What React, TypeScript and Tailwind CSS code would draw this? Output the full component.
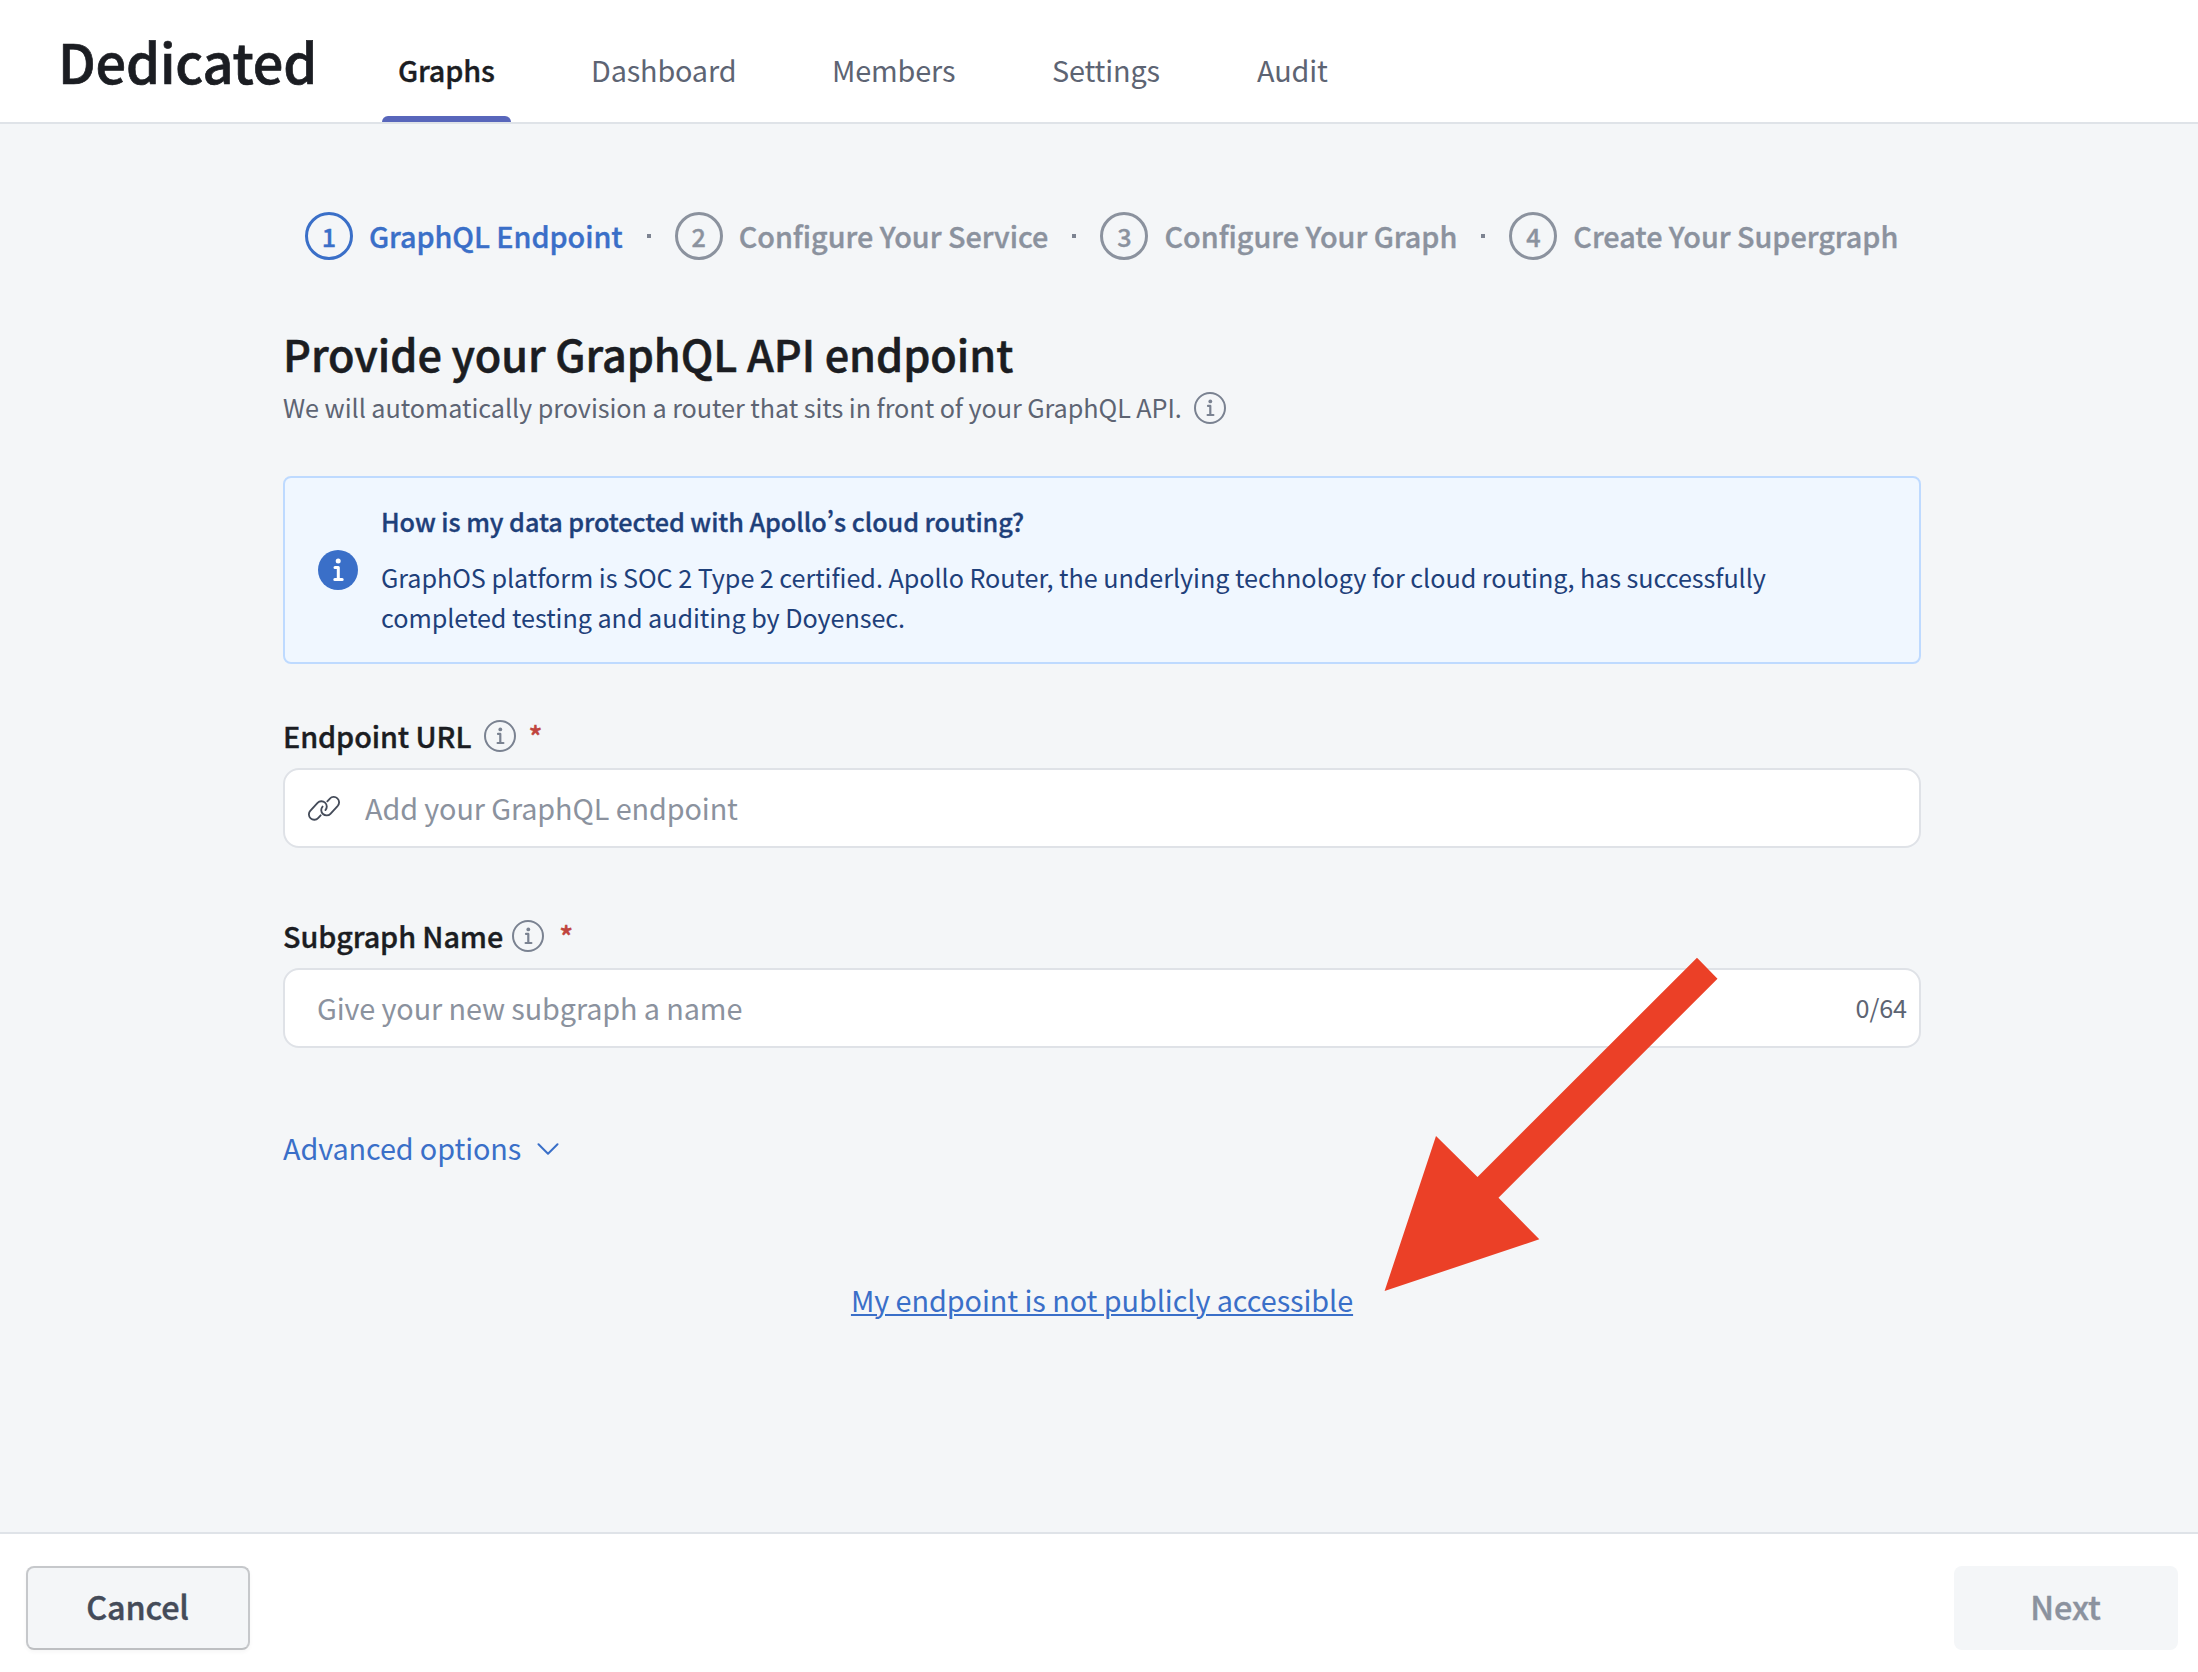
import type { ReactNode } from "react";

const tabs = [
  { label: "Graphs", width: "w-[129px]", active: true },
  { label: "Dashboard", width: "w-[177px]" },
  { label: "Members", width: "w-[156px]" },
  { label: "Settings", width: "w-[141px]" },
  { label: "Audit", width: "w-[104px]" },
];

const steps = [
  "GraphQL Endpoint",
  "Configure Your Service",
  "Configure Your Graph",
  "Create Your Supergraph",
];

function InfoIcon({ className = "" }: { className?: string }) {
  return (
    <svg
      viewBox="0 0 32 32"
      className={"size-8 shrink-0 text-[#7a8291] " + className}
      fill="none"
      stroke="currentColor"
      strokeLinecap="round"
      strokeLinejoin="round"
    >
      <circle cx="16" cy="16" r="15" strokeWidth="2" />
      <circle cx="16.3" cy="9.4" r="1.9" fill="currentColor" stroke="none" />
      <path d="M14 13.9h2.3v9M13.6 23h5.8" strokeWidth="2.2" />
    </svg>
  );
}

function InfoSolidIcon() {
  return (
    <svg viewBox="0 0 40 40" className="size-10 shrink-0" fill="none">
      <circle cx="20" cy="20" r="20" fill="#3a6fc8" />
      <circle cx="20.2" cy="10.9" r="2.5" fill="#fff" />
      <path
        d="M17 17.6h3.3v11.6M16.8 29.4h7.4"
        stroke="#fff"
        strokeWidth="3"
        strokeLinecap="round"
        strokeLinejoin="round"
      />
    </svg>
  );
}

function LinkIcon() {
  return (
    <svg
      viewBox="0 0 96 75"
      className="h-[25px] w-8 shrink-0"
      fill="none"
      stroke="#444b59"
      strokeWidth="5.5"
      strokeLinecap="round"
      strokeLinejoin="round"
    >
      <path d="M38 58 30.3 66.3A16 16 0 0 1 6.7 44.7L28.7 20.7A16 16 0 0 1 52.3 42.3" />
      <path d="M58 16 65.7 7.7A16 16 0 0 1 89.3 29.3L67.3 53.3A16 16 0 0 1 43.7 31.7" />
    </svg>
  );
}

function Label({ text, gap, starGap }: { text: string; gap: string; starGap: string }) {
  return (
    <div className="flex h-10 items-center text-[28.8px] leading-10 font-medium tracking-[-0.09px] text-[#1b1d22] [-webkit-text-stroke:0.013em]">
      <span className="pt-[2px]">{text}</span>
      <InfoIcon className={"mt-[2px] " + gap} />
      <span className={"pt-[2px] text-[#c0443e] " + starGap}>*</span>
    </div>
  );
}

function Field({ children, className }: { children: ReactNode; className: string }) {
  return (
    <div
      className={
        "mt-[13px] flex h-20 items-center rounded-2xl border-2 border-[#dfe2e7] bg-white text-[28.8px] leading-[38px] tracking-[-0.1px] text-[#8b929e] " +
        className
      }
    >
      {children}
    </div>
  );
}

export default function App() {
  return (
    <div className="relative flex h-[1672px] w-[2198px] flex-col overflow-hidden bg-[#f4f6f8] font-['Noto_Sans_CJK_SC',sans-serif]">
      <header className="flex h-[124px] shrink-0 border-b-2 border-[#dfe3e8] bg-white pl-[58px]">
        <h1 className="mt-[30px] h-[61px] w-[260px] text-[54px] leading-[61px] font-medium tracking-[-0.15px] whitespace-nowrap text-[#1b1d22] [-webkit-text-stroke:0.013em]">
          Dedicated
        </h1>
        <nav className="ml-16 flex gap-16 text-[28.8px] tracking-[-0.15px]">
          {tabs.map((tab) => (
            <div
              key={tab.label}
              className={"flex h-full flex-col justify-between " + tab.width}
            >
              <span
                className={
                  "mt-[49px] px-4 leading-[41px] whitespace-nowrap " +
                  (tab.active
                    ? "font-medium text-[#1b1d22] [-webkit-text-stroke:0.013em]"
                    : "text-[#5d6473]")
                }
              >
                {tab.label}
              </span>
              {tab.active && <div className="h-[6px] rounded-t-[8px] bg-[#5866bb]" />}
            </div>
          ))}
        </nav>
      </header>

      <main className="ml-[283px] w-[1638px] grow pt-[88px]">
        <ol className="ml-[22px] flex h-12 items-center gap-6 text-[28.8px] leading-[39px] font-medium [-webkit-text-stroke:0.013em]">
          {steps.map((step, i) => (
            <li key={step} className="flex items-center gap-6">
              {i > 0 && <span className="size-1 bg-[#7c8391]" />}
              <div
                className={
                  "flex items-center gap-4 " +
                  (i === 0
                    ? "tracking-[-0.08px] text-[#3a6fc8]"
                    : "tracking-[-0.02px] text-[#8b929e]")
                }
              >
                <span className="flex size-12 items-center justify-center rounded-full border-3 border-current pb-px text-[25.2px] leading-9">
                  {i + 1}
                </span>
                <span className="pb-[2px] whitespace-nowrap">{step}</span>
              </div>
            </li>
          ))}
        </ol>

        <h2 className="mt-[65px] text-[43.2px] leading-[56px] font-medium tracking-[-0.04px] text-[#1b1d22] [-webkit-text-stroke:0.013em]">
          Provide your GraphQL API endpoint
        </h2>
        <div className="mt-[6px] flex h-10 items-center text-[25.2px] leading-10 tracking-[-0.058px] text-[#5d6473]">
          <span>We will automatically provision a router that sits in front of your GraphQL API.</span>
          <InfoIcon className="mt-[2px] ml-[12px]" />
        </div>

        <section className="mt-[49px] flex h-[188px] items-center rounded-lg border-2 border-[#bedaff] bg-[#f0f7ff] pl-[33px] text-[25.2px] leading-10 tracking-[-0.06px] text-[#1e407a]">
          <InfoSolidIcon />
          <div className="ml-[23px] pb-[2px] whitespace-nowrap">
            <h3 className="font-medium [-webkit-text-stroke:0.013em]">
              How is my data protected with Apollo
              <span className="[font-feature-settings:'pwid']">’</span>s cloud routing?
            </h3>
            <p className="mt-4">
              GraphOS platform is SOC 2 Type 2 certified. Apollo Router, the underlying technology for cloud routing, has successfully
              <br />
              completed testing and auditing by Doyensec.
            </p>
          </div>
        </section>

        <div className="mt-[51px]">
          <Label text="Endpoint URL" gap="ml-[13px]" starGap="ml-[12px]" />
          <Field className="pl-[23px]">
            <LinkIcon />
            <span className="ml-[25px] pb-px">Add your GraphQL endpoint</span>
          </Field>
        </div>

        <div className="mt-[67px]">
          <Label text="Subgraph Name" gap="ml-[9px]" starGap="ml-[15px]" />
          <Field className="justify-between pr-[12px] pl-[32px]">
            <span className="pb-px">Give your new subgraph a name</span>
            <span className="pb-[3px] text-[25.2px] text-[#5d6473]">0/64</span>
          </Field>
        </div>

        <button className="mt-[80px] flex h-10 items-center text-[28.8px] leading-10 tracking-[-0.1px] text-[#3a6fc8]">
          Advanced options
          <svg
            viewBox="0 0 22 12"
            className="mt-px ml-[16px] h-3 w-[22px]"
            fill="none"
            stroke="currentColor"
            strokeWidth="2"
            strokeLinecap="round"
            strokeLinejoin="round"
          >
            <path d="M1.5 1.2 11 10.8 20.5 1.2" />
          </svg>
        </button>

        <div className="mt-[112px] flex justify-center text-[28.8px] leading-10 tracking-[-0.06px] text-[#3a6fc8]">
          <a className="underline decoration-2 underline-offset-[2px]">
            My endpoint is not publicly accessible
          </a>
        </div>
      </main>

      <footer className="flex h-[140px] shrink-0 justify-between border-t-2 border-[#dfe3e8] bg-white pt-8 pr-5 pl-[26px] text-[32.4px] leading-10 font-medium [-webkit-text-stroke:0.013em]">
        <button className="h-[84px] w-56 rounded-lg border-2 border-[#c6c8cb] border-b-[#bdbfc2] bg-[#f4f6f8] pr-px pb-[5px] tracking-[-0.2px] text-[#444b59] shadow-[0_2px_4px_rgba(0,0,0,0.04)]">
          Cancel
        </button>
        <button className="h-[84px] w-56 rounded-lg bg-[#f4f6f8] pr-px pb-[5px] text-[#8b929e]">
          Next
        </button>
      </footer>

      <svg
        viewBox="0 0 336 336"
        className="absolute top-[956px] left-[1383px] size-[336px] fill-[#eb4027]"
      >
        <path d="M314 1.7 334.5 22.7 115.5 241.7 156.3 283.3 1.6 335 53 180 94.5 221Z" />
      </svg>
    </div>
  );
}
